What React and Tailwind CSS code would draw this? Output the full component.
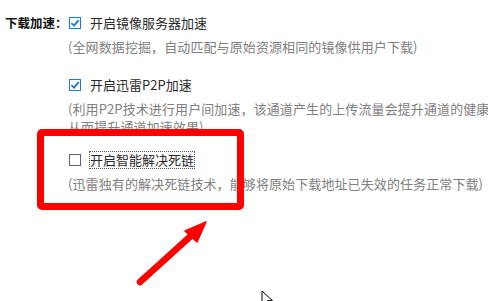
import React from 'react';

const font = { fontFamily: '"Microsoft YaHei", "Noto Sans CJK SC", "Noto Sans", sans-serif' };

function Check({ checked }) {
  if (!checked) {
    return <div className="w-[12px] h-[12px] border border-[#666] bg-white shrink-0" />;
  }
  return (
    <div className="w-[12px] h-[12px] border border-[#1c7ad6] bg-white shrink-0 flex items-center justify-center">
      <svg width="10" height="10" viewBox="0 0 10 10">
        <path d="M1.4 5.2 L4 7.7 L8.7 2.1" fill="none" stroke="#1c7ad6" strokeWidth="1.8" />
      </svg>
    </div>
  );
}

function Option({ checked, label, focused, className = '' }) {
  return (
    <div className={`flex items-center h-[16px] ${className}`}>
      <Check checked={checked} />
      <span
        className={`ml-[9px] text-[13px] leading-[16px] text-[#2a2a2a] ${focused ? 'outline outline-1 outline-dotted outline-[#555] outline-offset-0' : ''}`}
      >
        {label}
      </span>
    </div>
  );
}

export default function App() {
  return (
    <div className="relative w-[488px] h-[301px] bg-white overflow-hidden" style={font}>
      <div className="flex pt-[15px]">
        <div className="w-[69px] pl-[5px] shrink-0 text-[12.5px] leading-[16px] font-bold text-[#111]">下载加速：</div>
        <div className="flex flex-col min-w-0">
          <Option checked label="开启镜像服务器加速" />
          <p className="mt-[8px] -ml-[1px] text-[13px] leading-[16px] text-[#808080] whitespace-nowrap tracking-[0.1px]">
            (全网数据挖掘，自动匹配与原始资源相同的镜像供用户下载)
          </p>

          <Option checked label="开启迅雷P2P加速" className="mt-[22px]" />
          <div className="mt-[7px] -ml-[1px] text-[13px] leading-[18px] text-[#808080] whitespace-nowrap tracking-[0.1px]">
            <p>(利用P2P技术进行用户间加速，该通道产生的上传流量会提升通道的健康</p>
            <p>从而提升通道加速效果)</p>
          </div>

          <Option label="开启智能解决死链" focused className="mt-[16px]" />
          <p className="mt-[8px] -ml-[1px] text-[13px] leading-[16px] text-[#808080] whitespace-nowrap tracking-[0.1px]">
            (迅雷独有的解决死链技术，能够将原始下载地址已失效的任务正常下载)
          </p>
        </div>
      </div>

      {/* red highlight box */}
      <div className="absolute left-[37px] top-[129px] w-[207px] h-[81px] border-[7px] border-[#ff0000] rounded-[5px]" />

      {/* red arrow */}
      <svg className="absolute left-0 top-0" width="488" height="301">
        <line x1="140" y1="282" x2="193" y2="234" stroke="#ff0000" strokeWidth="6.5" strokeLinecap="round" />
        <polygon points="206,222 185,231 197,242" fill="#ff0000" stroke="#ff0000" strokeWidth="1.5" strokeLinejoin="round" />
      </svg>

      {/* mouse cursor */}
      <svg className="absolute left-[261px] top-[290px]" width="14" height="20" viewBox="0 0 14 20">
        <path d="M1 1 L1 15 L4.5 11.5 L7 17 L9 16 L6.6 10.6 L11.5 10.6 Z" fill="#fff" stroke="#000" strokeWidth="1" strokeLinejoin="round" />
      </svg>
    </div>
  );
}
